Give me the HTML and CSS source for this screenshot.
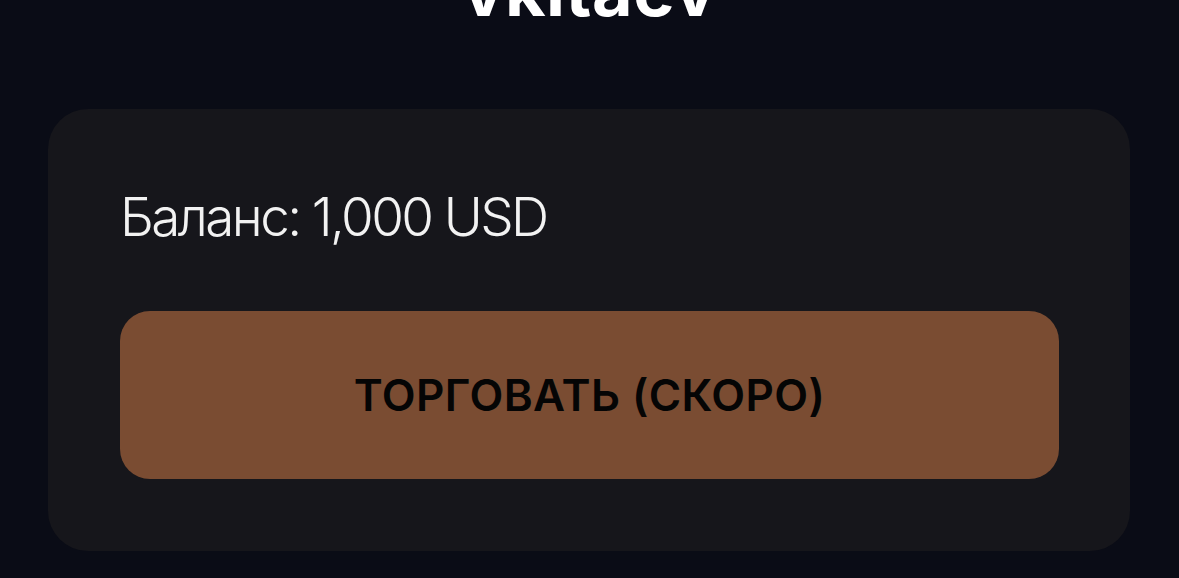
FILE: index.html
```html
<!DOCTYPE html>
<html lang="ru">
<head>
  <meta charset="UTF-8" />
  <meta name="viewport" content="width=device-width, initial-scale=1.0"/>
  <title>vkitaev</title>
  <link rel="stylesheet" href="styles.css">
</head>
<body>
  <header class="profile">
    <h1>vkitaev</h1>
  </header>

  <div class="wallet-card">
    <p class="balance">Баланс: 1,000 USD</p>
    <button class="trade-btn" disabled>ТОРГОВАТЬ (СКОРО)</button>
  </div>
</body>
</html>
```

FILE: styles.css
```css
body {
  font-family: Inter, "Noto Sans", sans-serif;
  margin: 0;
  background-color: #0a0c16;
  color: white;
}

.profile {
  text-align: center;
}

.profile h1 {
  margin: -44px 0 83px;
  font-size: 70px;
  line-height: 1;
  font-weight: 700;
  letter-spacing: 0.5px;
}

.wallet-card {
  margin: 0 49px 0 48px;
  padding: 77px 71px 72px 72px;
  background: #16161b;
  border-radius: 40px;
}

.balance {
  margin: 0 0 61px;
  font-size: 53px;
  line-height: 1.2;
  font-weight: 300;
  letter-spacing: -2.6px;
  color: #f2f2f2;
}

.trade-btn {
  display: block;
  width: 100%;
  height: 168px;
  border: none;
  border-radius: 30px;
  background: #7a4c32;
  color: #050505;
  font-family: Inter, "Noto Sans", sans-serif;
  font-size: 44px;
  font-weight: 600;
  letter-spacing: 0.4px;
  cursor: not-allowed;
}
```
